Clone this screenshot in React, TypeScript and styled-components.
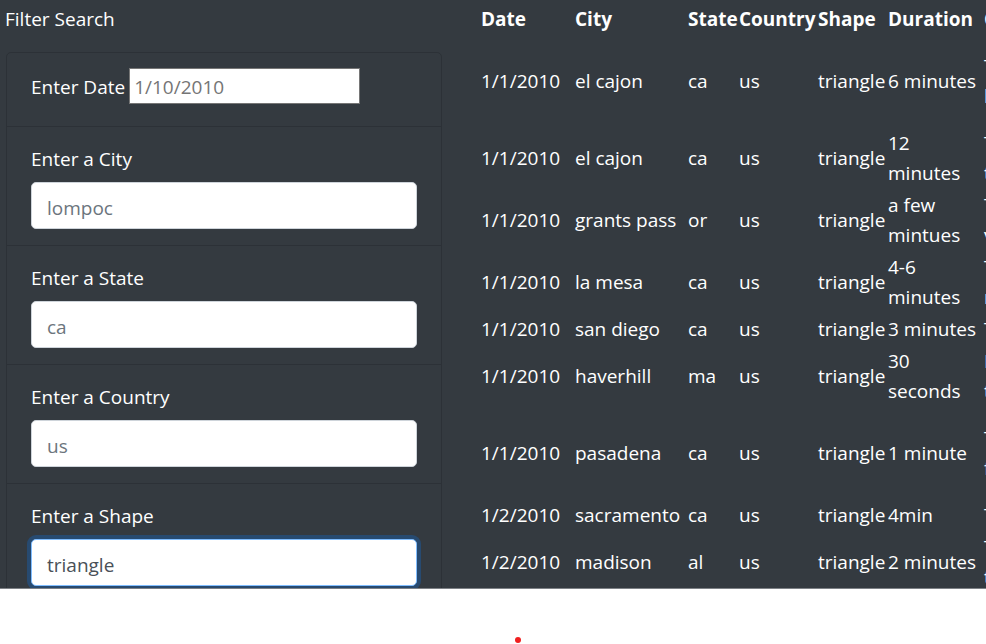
import React from "react"
import styled, { createGlobalStyle } from "styled-components"

const GlobalStyle = createGlobalStyle`
  html, body {
    margin: 0;
    padding: 0;
    background: #ffffff;
  }
  body {
    font-family: "Segoe UI", "Open Sans", "Noto Sans", sans-serif;
    font-size: 19px;
    line-height: 30px;
    color: #ffffff;
  }
  * {
    box-sizing: border-box;
  }
`

type Sighting = {
  datetime: string;
  city: string;
  state: string;
  country: string;
  shape: string;
  duration: string;
  comments: string;
  height: number;
}

const sightings: Sighting[] = [
  { datetime: "1/1/2010", city: "el cajon", state: "ca", country: "us", shape: "triangle", duration: "6 minutes", comments: "Three lights in a triangle hovering over the hills, no sound at all.", height: 92 },
  { datetime: "1/1/2010", city: "el cajon", state: "ca", country: "us", shape: "triangle", duration: "12 minutes", comments: "Triangle of orange lights moving slowly to the east.", height: 62 },
  { datetime: "1/1/2010", city: "grants pass", state: "or", country: "us", shape: "triangle", duration: "a few mintues", comments: "Tri-angular craft seen low over the river valley.", height: 62 },
  { datetime: "1/1/2010", city: "la mesa", state: "ca", country: "us", shape: "triangle", duration: "4-6 minutes", comments: "Triangle shaped lights, red and white, drifting north.", height: 62 },
  { datetime: "1/1/2010", city: "san diego", state: "ca", country: "us", shape: "triangle", duration: "3 minutes", comments: "Three orange lights.", height: 32 },
  { datetime: "1/1/2010", city: "haverhill", state: "ma", country: "us", shape: "triangle", duration: "30 seconds", comments: "Bright triangle passed overhead very fast, then vanished.", height: 62 },
  { datetime: "1/1/2010", city: "pasadena", state: "ca", country: "us", shape: "triangle", duration: "1 minute", comments: "Two triangles of light flying together over the foothills toward the city.", height: 92 },
  { datetime: "1/2/2010", city: "sacramento", state: "ca", country: "us", shape: "triangle", duration: "4min", comments: "Triangle with white lights.", height: 32 },
  { datetime: "1/2/2010", city: "madison", state: "al", country: "us", shape: "triangle", duration: "2 minutes", comments: "Triangle of lights hovering, then shot off to the west.", height: 62 },
]

const columns = [
  { label: "Date", width: 94 },
  { label: "City", width: 113 },
  { label: "State", width: 51 },
  { label: "Country", width: 79 },
  { label: "Shape", width: 70 },
  { label: "Duration", width: 96 },
  { label: "Comments", width: 400 },
]

const Screen = styled.div`
  height: 589px;
  background: #343a40;
  border-bottom: 1px solid #7d8186;
  overflow: hidden;
  display: flex;
  padding-top: 4px;
`

const FilterColumn = styled.div`
  width: 481px;
  flex-shrink: 0;
  padding-left: 5px;
`

const FilterTitle = styled.div`
  height: 30px;
  margin-bottom: 18px;
`

const Panel = styled.ul`
  list-style: none;
  margin: 0 0 0 1px;
  padding: 0;
  width: 436px;
  border: 1px solid rgba(0, 0, 0, 0.14);
  border-radius: 5px;
`

const PanelItem = styled.li<{ $inline?: boolean }>`
  display: flex;
  flex-direction: ${(p) => (p.$inline ? "row" : "column")};
  align-items: ${(p) => (p.$inline ? "center" : "stretch")};
  padding: ${(p) => (p.$inline ? "15px 24px 22px" : "17px 24px 16px")};
  border-top: 1px solid rgba(0, 0, 0, 0.14);

  &:first-child {
    border-top: none;
  }
`

const Label = styled.label<{ $inline?: boolean }>`
  display: block;
  line-height: 30px;
  margin: ${(p) => (p.$inline ? "2px 4px 0 0" : "0 0 8px 0")};
`

const PlainInput = styled.input`
  width: 231px;
  height: 36px;
  padding: 2px 4px 0;
  border: 1px solid #767676;
  border-radius: 0;
  font: inherit;
  color: #495057;
  background: #ffffff;
  outline: none;

  &::placeholder {
    color: #757575;
  }
`

const FormControl = styled.input<{ $focused?: boolean }>`
  display: block;
  width: 100%;
  height: 47px;
  padding: 9px 15px 5px;
  font: inherit;
  color: #495057;
  background: #ffffff;
  border: 1px solid ${(p) => (p.$focused ? "#80bdff" : "#ced4da")};
  border-radius: 5px;
  box-shadow: ${(p) => (p.$focused ? "0 0 0 4px rgba(0, 123, 255, 0.25)" : "none")};
  outline: none;

  &::placeholder {
    color: #6c757d;
  }
`

const TableColumn = styled.div`
  flex: 1;
  overflow: hidden;
`

const Table = styled.table`
  border-collapse: separate;
  border-spacing: 0;
  table-layout: fixed;
  width: 903px;
`

const HeadCell = styled.th`
  text-align: left;
  font-weight: 700;
  padding: 0;
  height: 30px;
  white-space: nowrap;
  vertical-align: middle;
`

const Cell = styled.td`
  padding: 2px 0 0;
  vertical-align: middle;
`

const Footer = styled.div`
  height: 55px;
  position: relative;
`

const Dot = styled.span`
  position: absolute;
  left: 515px;
  top: 48px;
  width: 6px;
  height: 6px;
  border-radius: 50%;
  background: #f01f1f;
`

const App: React.FC = () => {
  return (
    <>
      <GlobalStyle />
      <Screen>
        <FilterColumn>
          <FilterTitle>Filter Search</FilterTitle>
          <Panel>
            <PanelItem $inline>
              <Label $inline htmlFor="datetime">Enter Date</Label>
              <PlainInput id="datetime" type="text" placeholder="1/10/2010" />
            </PanelItem>
            <PanelItem>
              <Label htmlFor="city">Enter a City</Label>
              <FormControl id="city" type="text" placeholder="lompoc" />
            </PanelItem>
            <PanelItem>
              <Label htmlFor="state">Enter a State</Label>
              <FormControl id="state" type="text" placeholder="ca" />
            </PanelItem>
            <PanelItem>
              <Label htmlFor="country">Enter a Country</Label>
              <FormControl id="country" type="text" placeholder="us" />
            </PanelItem>
            <PanelItem>
              <Label htmlFor="shape">Enter a Shape</Label>
              <FormControl id="shape" type="text" placeholder="circle" defaultValue="triangle" $focused />
            </PanelItem>
          </Panel>
        </FilterColumn>

        <TableColumn>
          <Table>
            <colgroup>
              {columns.map((c) => (
                <col key={c.label} style={{ width: c.width }} />
              ))}
            </colgroup>
            <thead>
              <tr>
                {columns.map((c) => (
                  <HeadCell key={c.label}>{c.label}</HeadCell>
                ))}
              </tr>
            </thead>
            <tbody>
              {sightings.map((s, i) => (
                <tr key={i} style={{ height: s.height }}>
                  <Cell>{s.datetime}</Cell>
                  <Cell>{s.city}</Cell>
                  <Cell>{s.state}</Cell>
                  <Cell>{s.country}</Cell>
                  <Cell>{s.shape}</Cell>
                  <Cell>{s.duration}</Cell>
                  <Cell>{s.comments}</Cell>
                </tr>
              ))}
            </tbody>
          </Table>
        </TableColumn>
      </Screen>
      <Footer>
        <Dot />
      </Footer>
    </>
  )
}

export default App
